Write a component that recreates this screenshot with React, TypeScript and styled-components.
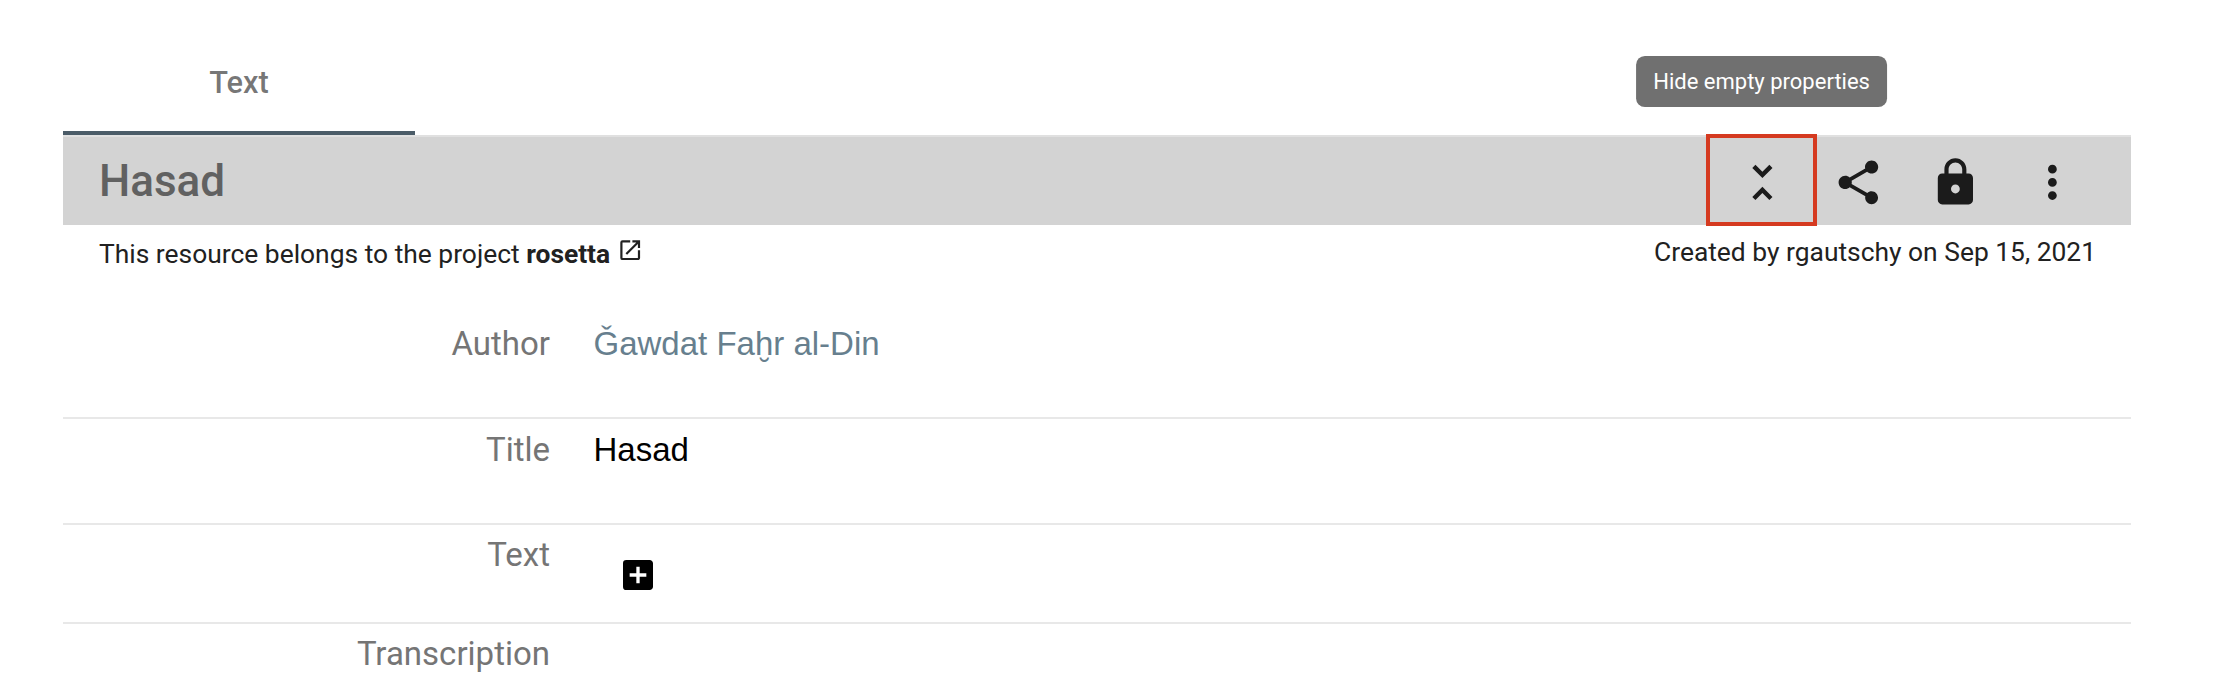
import React from 'react';
import styled, { createGlobalStyle } from 'styled-components';
import { MdUnfoldLess, MdShare, MdLock, MdMoreVert, MdOpenInNew, MdAddBox } from 'react-icons/md';

const GlobalStyle = createGlobalStyle`
  *, *::before, *::after { box-sizing: border-box; }
  body {
    margin: 0;
    background: #fff;
    font-family: Roboto, "Liberation Sans", sans-serif;
    overflow: hidden;
  }
`;

const Page = styled.main`
  height: 688px;
  padding: 29px 89px 0 63px;
  overflow: hidden;
`;

const TabBar = styled.nav`
  display: flex;
  height: 108px;
  border-bottom: 2px solid #e0e0e0;
`;

const Tab = styled.button`
  width: 352px;
  border: 0;
  border-bottom: 4px solid #4b5c68;
  padding: 5px 0 0;
  background: none;
  font: 500 30.8px/36px Roboto, sans-serif;
  color: rgba(0, 0, 0, 0.54);
`;

const Header = styled.header`
  display: flex;
  align-items: center;
  justify-content: space-between;
  height: 88px;
  padding: 0 30.6px 0 36px;
  background: #d3d3d3;
`;

const Title = styled.h1`
  margin: 0;
  font-size: 44px;
  line-height: 52px;
  font-weight: 500;
  color: #616161;
`;

const Actions = styled.div`
  display: flex;
  height: 100%;
`;

const Action = styled.button`
  position: relative;
  display: flex;
  align-items: center;
  justify-content: center;
  width: 96.8px;
  height: 100%;
  border: 0;
  padding: 3px 0 0;
  background: none;
  color: #1b1b1b;
  font-family: inherit;
  font-size: 52.8px;
`;

const CollapseIcon = styled(MdUnfoldLess)`
  margin-left: 1px;
`;

const Highlight = styled.span`
  position: absolute;
  top: -3px;
  left: -7.4px;
  width: 111px;
  height: 92px;
  border: 4px solid #d53a20;
`;

const Tooltip = styled.span`
  position: absolute;
  top: -81px;
  left: 50%;
  transform: translateX(-50%);
  padding: 0 17.6px;
  border-radius: 8.8px;
  background: #707070;
  color: #fff;
  font-size: 22px;
  line-height: 51px;
  white-space: nowrap;
`;

const Meta = styled.div`
  display: flex;
  justify-content: space-between;
  height: 88px;
  padding: 9px 35px 0 36px;
  font-size: 26.4px;
  line-height: 36px;
  color: #212121;
`;

const Project = styled.div`
  display: flex;
  padding-top: 2px;
  white-space: pre;

  svg {
    margin: 1px 0 0 7px;
  }
`;

const Property = styled.section<{ $height: number; $top?: number }>`
  display: grid;
  grid-template-columns: 487px 1fr;
  column-gap: 43.5px;
  height: ${({ $height }) => $height}px;
  padding-top: ${({ $top = 10 }) => $top}px;
  border-bottom: 2px solid #e8e8e8;
  font-size: 33px;
  line-height: 40px;
`;

const Label = styled.h2`
  margin: 0;
  font-size: inherit;
  font-weight: 400;
  text-align: right;
  color: #757575;
`;

const Value = styled.div<{ $link?: boolean }>`
  font-family: "Liberation Sans", Arial, sans-serif;
  color: ${({ $link }) => ($link ? '#677f8e' : '#000')};
`;

const AddButton = styled.button`
  display: flex;
  margin: 20px 0 0 24px;
  border: 0;
  padding: 0;
  background: none;
  color: #000;
  font-size: 40px;
`;

export default function App() {
  return (
    <Page>
      <GlobalStyle />
      <TabBar>
        <Tab>Text</Tab>
      </TabBar>
      <Header>
        <Title>Hasad</Title>
        <Actions>
          <Action>
            <CollapseIcon />
            <Highlight />
            <Tooltip>Hide empty properties</Tooltip>
          </Action>
          <Action><MdShare /></Action>
          <Action><MdLock /></Action>
          <Action><MdMoreVert /></Action>
        </Actions>
      </Header>
      <Meta>
        <Project>
          <span>This resource belongs to the project <b>rosetta</b></span>
          <MdOpenInNew />
        </Project>
        <span>Created by rgautschy on Sep 15, 2021</span>
      </Meta>
      <Property $height={106} $top={11}>
        <Label>Author</Label>
        <Value $link>Ǧawdat Faḫr al-Din</Value>
      </Property>
      <Property $height={106} $top={11}>
        <Label>Title</Label>
        <Value>Hasad</Value>
      </Property>
      <Property $height={99}>
        <Label>Text</Label>
        <Value><AddButton><MdAddBox /></AddButton></Value>
      </Property>
      <Property $height={106}>
        <Label>Transcription</Label>
      </Property>
    </Page>
  );
}
